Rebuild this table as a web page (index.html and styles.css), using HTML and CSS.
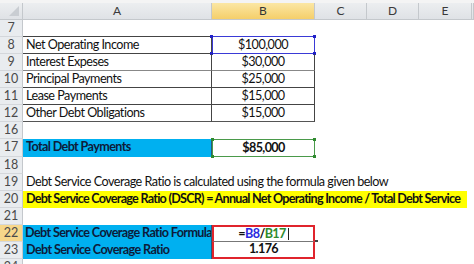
FILE: index.html
```html
<!DOCTYPE html>
<html>
<head>
<meta charset="utf-8">
<link rel="stylesheet" href="styles.css">
</head>
<body>
<div class="sheet">
  <div class="hdr">
    <div class="corner"><span class="tri"></span></div>
    <div class="ch">A</div>
    <div class="ch act">B</div>
    <div class="ch">C</div>
    <div class="ch">D</div>
    <div class="ch">E</div>
    <div class="ch"></div>
  </div>
  <div class="rows">
    <div class="row"><div class="rh">7</div></div>
    <div class="row"><div class="rh">8</div><div class="c a tb tt">Net Operating Income</div><div class="c b tb tt ctr sel-blue">$100,000<i class="h tl"></i><i class="h tr"></i><i class="h bl"></i><i class="h br"></i></div></div>
    <div class="row"><div class="rh">9</div><div class="c a tb">Interest Expeses</div><div class="c b tb ctr">$30,000</div></div>
    <div class="row"><div class="rh">10</div><div class="c a tb tg">Principal Payments</div><div class="c b tb tg ctr">$25,000</div></div>
    <div class="row"><div class="rh">11</div><div class="c a tb">Lease Payments</div><div class="c b tb ctr">$15,000</div></div>
    <div class="row"><div class="rh">12</div><div class="c a tb bb">Other Debt Obligations</div><div class="c b tb bb ctr">$15,000</div></div>
    <div class="row"><div class="rh">16</div></div>
    <div class="row"><div class="rh">17</div><div class="c a blue bold">Total Debt Payments</div><div class="c b bold ctr sel-green">$85,000<i class="h tl"></i><i class="h tr"></i><i class="h bl"></i><i class="h br"></i></div></div>
    <div class="row"><div class="rh">18</div></div>
    <div class="row"><div class="rh">19</div><div class="c span">Debt Service Coverage Ratio is calculated using the formula given below</div></div>
    <div class="row"><div class="rh">20</div><div class="c yel bold">Debt Service Coverage Ratio (DSCR) = Annual Net Operating Income / Total Debt Service</div></div>
    <div class="row"><div class="rh">21</div></div>
    <div class="row"><div class="rh act">22</div><div class="c a blue bold clip tight">Debt Service Coverage Ratio Formula</div><div class="c b bold ctr red-top">=<span class="rb">B8</span>/<span class="rg">B17</span><span class="caret"></span></div></div>
    <div class="row"><div class="rh">23</div><div class="c a blue bold">Debt Service Coverage Ratio</div><div class="c b bold ctr red-bot">1.176<i class="tick"></i></div></div>
    <div class="row"><div class="rh">24</div></div>
  </div>
</div>
</body>
</html>
```
FILE: styles.css
```css
* { box-sizing: border-box; margin: 0; padding: 0; }
html, body { width: 474px; height: 264px; overflow: hidden; background: #fff; }
body { font-family: Lato, "Open Sans", sans-serif; font-size: 12.6px; letter-spacing: -0.5px; color: #111; }
.sheet { width: 474px; height: 264px; display: flex; flex-direction: column; }
.hdr {
  height: 20px; display: grid;
  grid-template-columns: 23px 189px 103px 52px 52px 53px 1fr;
  border-top: 3px solid #f4f4f4;
  background: linear-gradient(#eceef0, #dfe2e6);
  border-bottom: 1px solid #c4c8cc;
}
.corner { border-right: 1px solid #c4c8cc; position: relative; }
.tri { position: absolute; right: 3px; bottom: 3px; width: 0; height: 0;
  border-left: 10px solid transparent; border-bottom: 10px solid #c9cdd2; }
.ch { border-right: 1px solid #c4c8cc; text-align: center; font-size: 12px; letter-spacing: 0; line-height: 16px; color: #3a3a3a; font-family: Lato, sans-serif; }
.ch.act { background: linear-gradient(#fbe7a4, #f5cf6a); color: #333; }
.rows { flex: 1; display: flex; flex-direction: column; }
.row { flex: 1; display: grid; grid-template-columns: 23px 189px 103px 52px 52px 53px 1fr; min-height: 0; }
.rh {
  background: #e9ecef; border-right: 1px solid #c4c8cc; border-bottom: 1px solid #d4d7db;
  text-align: center; color: #4a4a4a; line-height: 16px; font-family: Lato, sans-serif;
  font-size: 12.5px; letter-spacing: 0;
}
.rh.act { background: #f7d78a; }
.c { position: relative; padding-left: 3px; line-height: 16px; white-space: nowrap; overflow: visible; }
.a { grid-column: 2; }
.b { grid-column: 3; }
.clip { overflow: hidden; }
.tight { padding-left: 2px; }
.ctr { text-align: center; padding-left: 0; }
.bold { font-weight: 700; letter-spacing: -0.62px; }
.tb { border-bottom: 1px solid #444; border-right: 1px solid #444; }
.tt { border-top: 1px solid #444; margin-top: -1px; }
.tg { border-top: 1px solid #888; margin-top: -1px; }
.bb { border-bottom: 1px solid #555; }
.blue { background: #00b0f0; color: #0d1b3a; border-right: 1px solid #2a5a7a; }
.span { grid-column: 2 / 8; }
.yel { grid-column: 2 / 7; background: #ffff00; width: 444px; overflow: hidden; letter-spacing: -0.74px; }
.sel-blue { outline: 1px solid #3a3ad6; outline-offset: -1px; border-color: #3a3ad6; }
.sel-green { border: 1px solid #4a9a4a; }
.h { position: absolute; width: 3px; height: 3px; }
.sel-blue .h { background: #2020c8; }
.sel-green .h { background: #2f8a2f; }
.h.tl { left: -2px; top: -2px; }
.h.tr { right: -2px; top: -2px; }
.h.bl { left: -2px; bottom: -2px; }
.h.br { right: -2px; bottom: -2px; }
.rb { color: #2a2ae0; }
.rg { color: #2e8b2e; }
.caret { display: inline-block; width: 1px; height: 12px; background: #222; vertical-align: -2px; margin-left: 2px; }
.red-top { border: 2px solid #e0242c; border-bottom: 1px solid #777; line-height: 13px; }
.red-bot { border: 2px solid #e0242c; border-top: none; line-height: 14px; }
.tick { position: absolute; right: -5px; top: -2px; width: 3px; height: 2px; background: #444; }
```
